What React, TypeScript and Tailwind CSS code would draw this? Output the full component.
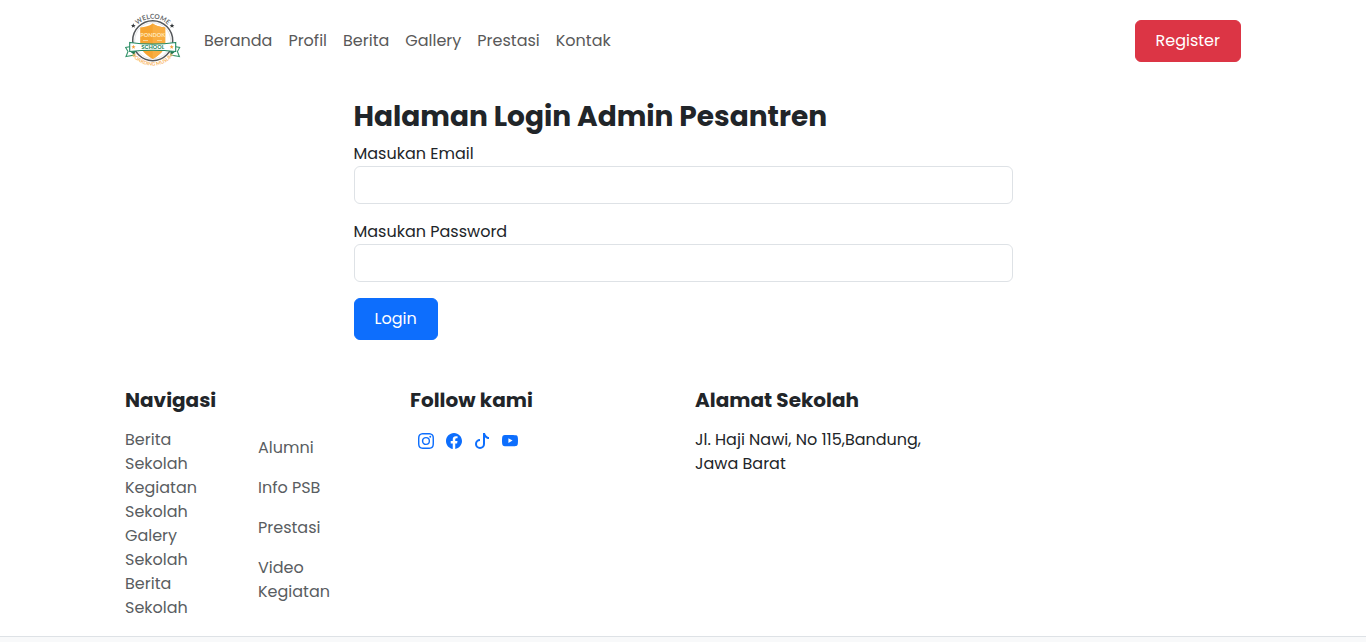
import { BsFacebook, BsInstagram, BsTiktok, BsYoutube } from "react-icons/bs";

const menu = ["Beranda", "Profil", "Berita", "Gallery", "Prestasi", "Kontak"];
const schoolLinks = ["Berita Sekolah", "Kegiatan Sekolah", "Galery Sekolah", "Berita Sekolah"];
const infoLinks = ["Alumni", "Info PSB", "Prestasi", "Video Kegiatan"];
const socials = [
  { label: "Instagram", Icon: BsInstagram },
  { label: "Facebook", Icon: BsFacebook },
  { label: "TikTok", Icon: BsTiktok },
  { label: "YouTube", Icon: BsYoutube },
];

function Logo() {
  return (
    <svg className="h-14 w-14" viewBox="0 0 56 56" fontFamily="Lato, sans-serif" textAnchor="middle" role="img" aria-label="Pondok School">
      <defs>
        <path id="arc-top" d="M5.900 27.500a21.800 21.800 0 0 1 43.600 0" />
        <path id="arc-bottom" d="M2.500 27.500a25.200 25.200 0 0 0 50.400 0" />
      </defs>
      <circle cx="27.700" cy="27.700" r="20" fill="#fff" stroke="#54575a" strokeWidth="1.500" />
      <circle cx="27.700" cy="27.700" r="18" fill="none" stroke="#c9cbcc" strokeWidth=".5" />
      <path d="M27.700 10.500c3.500 2.700 7.500 3.500 12.500 4V30c0 7-5.500 12-12.500 16-7-4-12.500-9-12.500-16V14.500c5-.5 9-1.300 12.500-4z" fill="#f6a431" />
      <path d="M27.700 10.500c3.500 2.700 7.500 3.500 12.500 4V30c0 7-5.500 12-12.500 16z" fill="#f9ae42" />
      <text x="27.700" y="24" fontSize="5.600" fontWeight="700" fill="#ffe9bd">PONDOK</text>
      <path d="M18 27.500h5M32 27.500h5" stroke="#fde0a8" strokeWidth=".8" />
      <path d="M6 33.500.7 34.500l2.300 4L1 43.500l8.500-1.500v-4zM49.400 33.500l5.300 1-2.300 4 2 5-8.500-1.500v-4z" fill="#fff" stroke="#36956c" strokeWidth="1.100" />
      <path d="M9.500 42V38L5 38.500zM45.900 42V38l4.500.5z" fill="#23764f" />
      <path d="M4.700 29.500q23 3.200 46 0v9q-23-2.600-46 0z" fill="#fff" stroke="#238960" strokeWidth="1.100" />
      <g fontSize="5.600" fontWeight="600" fill="#24835d" fontFamily="Poppins, Inter, sans-serif">
        <text x="27.700" y="36">SCHOOL</text>
      </g>
      <text fontSize="6.600" fontWeight="700" fill="#65686a"><textPath href="#arc-top" startOffset="50%">WELCOME</textPath></text>
      <text fontSize="5" fontWeight="700" fill="#f9b560"><textPath href="#arc-bottom" startOffset="50%">BOARDING MUSLIM</textPath></text>
      <path id="star" d="m8.300 10.300.7 1.600 1.700.1-1.300 1.100.4 1.700-1.500-1-1.500 1 .4-1.700-1.300-1.100 1.700-.1z" fill="#34383b" />
      <use href="#star" x="38.700" />
      <path d="m8.500 31.800.6 1.400 1.500.1-1.200.9.400 1.500-1.300-.8-1.300.8.400-1.500-1.200-.9 1.500-.1zM46.700 31.800l.6 1.400 1.500.1-1.200.9.400 1.500-1.300-.8-1.300.8.400-1.500-1.200-.9 1.500-.1z" fill="#f5a13b" />
    </svg>
  );
}

export default function App() {
  return (
    <div className="flex min-h-screen flex-col bg-white font-[Poppins,Inter,sans-serif] text-base leading-6 text-[#212529]">
      <header className="mx-auto flex w-full max-w-[1140px] items-center px-3 pt-[13px] pb-3">
        <a href="#" className="mr-[23px] shrink-0"><Logo /></a>
        <nav className="flex flex-1 flex-wrap gap-4 text-[#595959]">
          {menu.map((item) => <a key={item} href="#">{item}</a>)}
        </nav>
        <a href="#" className="rounded-md border border-[#dc3545] bg-[#dc3545] px-5 py-2 text-white">Register</a>
      </header>

      <main className="mx-auto w-full max-w-[683px] px-3 pt-[18px]">
        <h1 className="mb-2 text-[28px] leading-[35px] font-bold">Halaman Login Admin Pesantren</h1>
        <form onSubmit={(e) => e.preventDefault()}>
          <div className="mb-4 flex flex-col">
            <label htmlFor="email">Masukan Email</label>
            <input id="email" type="email" className="h-[38px] rounded-md border border-[#dee2e6] px-3" />
          </div>
          <div className="mb-4 flex flex-col">
            <label htmlFor="password">Masukan Password</label>
            <input id="password" type="password" className="h-[38px] rounded-md border border-[#dee2e6] px-3" />
          </div>
          <button type="submit" className="rounded-md border border-[#0d6efd] bg-[#0d6efd] px-5 py-2 text-white">Login</button>
        </form>
      </main>

      <footer className="flex flex-1 flex-col pt-12">
        <div className="mx-auto grid w-full max-w-[1140px] grid-cols-4 pb-4">
          <section className="px-3">
            <h2 className="mb-4 text-xl leading-6 font-bold">Navigasi</h2>
            <div className="flex gap-12 text-[#595d61]">
              <ul className="w-[85px]">
                {schoolLinks.map((item, i) => <li key={i}><a href="#">{item}</a></li>)}
              </ul>
              <ul className="flex w-20 flex-col gap-4 pt-2">
                {infoLinks.map((item) => <li key={item}><a href="#">{item}</a></li>)}
              </ul>
            </div>
          </section>
          <section className="px-3">
            <h2 className="mb-4 text-xl leading-6 font-bold">Follow kami</h2>
            <div className="flex gap-3 px-2 pt-[5px] text-[#0d6efd]">
              {socials.map(({ label, Icon }) => <a key={label} href="#" aria-label={label}><Icon /></a>)}
            </div>
          </section>
          <section className="px-3">
            <h2 className="mb-4 text-xl leading-6 font-bold">Alamat Sekolah</h2>
            <p>Jl. Haji Nawi, No 115,Bandung, Jawa Barat</p>
          </section>
        </div>
        <div className="flex-1 border-t border-[#dee2e6] bg-[#f8f9fa]" />
      </footer>
    </div>
  );
}
